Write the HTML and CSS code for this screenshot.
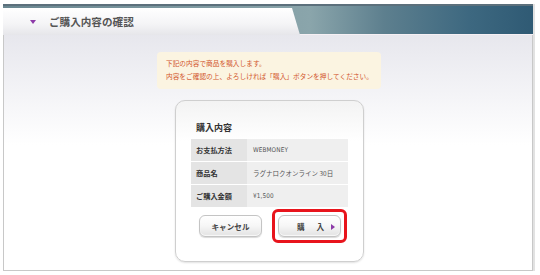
FILE: index.html
```html
<!DOCTYPE html>
<html lang="ja">
<head>
  <meta charset="UTF-8">
  <title>ご購入内容の確認</title>
  <link rel="stylesheet" href="styles.css">
</head>
<body>
  <div class="frame">
    <div class="header">
      <div class="tab">
        <span class="tab-arrow"></span>
        <h1>ご購入内容の確認</h1>
      </div>
    </div>

    <div class="content">
      <div class="notice">
        下記の内容で商品を購入します。<br>
        内容をご確認の上、よろしければ「購入」ボタンを押してください。
      </div>

      <div class="card">
        <h2>購入内容</h2>
        <table class="detail">
          <tr>
            <th>お支払方法</th>
            <td class="latin">WEBMONEY</td>
          </tr>
          <tr>
            <th>商品名</th>
            <td>ラグナロクオンライン 30日</td>
          </tr>
          <tr>
            <th>ご購入金額</th>
            <td class="latin">¥1,500</td>
          </tr>
        </table>

        <div class="actions">
          <button class="btn">キャンセル</button>
          <div class="highlight">
            <button class="btn btn-buy">購<span class="gap"></span>入<span class="buy-arrow"></span></button>
          </div>
        </div>
      </div>
    </div>
  </div>
</body>
</html>
```

FILE: styles.css
```css
body {
  margin: 0;
  background: #fff;
  font-family: "Noto Sans CJK JP", "Noto Sans", sans-serif;
}
.frame {
  margin: 4px 0 0 3px;
  width: 530px;
  height: 267px;
  box-sizing: border-box;
  border: 1px solid #c8c8c8;
  border-top: none;
  box-shadow: 2px 0 0 #e2e2e2;
  display: flex;
  flex-direction: column;
}
.header {
  height: 31px;
  box-sizing: border-box;
  padding-top: 2px;
  border-bottom: 1px solid #f6f0f4;
  background: linear-gradient(90deg, #6a8791 0%, #8aa5ab 58%, #5d7f8e 72%, #3d6880 88%, #2f5a74 100%);
  border-top: 2px solid #5c707c;
  margin: 0 -1px;
}
.tab {
  width: 297px;
  height: 27px;
  display: flex;
  align-items: center;
  padding-left: 27px;
  box-sizing: border-box;
  background: linear-gradient(#ffffff, #f4f4f6 60%, #e6e6ea);
  clip-path: polygon(0 0, 289px 0, 297px 100%, 0 100%);
}
.tab-arrow {
  width: 0;
  height: 0;
  border-left: 3.5px solid transparent;
  border-right: 3.5px solid transparent;
  border-top: 4px solid #8d3aa8;
  margin-right: 13px;
  margin-top: 1px;
}
.tab h1 {
  margin: 0;
  font-size: 10.6px;
  font-weight: bold;
  color: #555;
}
.content {
  flex: 1;
  padding-top: 17px;
  background: linear-gradient(#e7e7ed, #f4f4f7 60px, #fff 110px);
  display: flex;
  flex-direction: column;
  align-items: center;
}
.notice {
  width: 224px;
  height: 37px;
  box-sizing: border-box;
  padding: 5px 0 0 9px;
  margin-left: 2px;
  background: #fbf4e1;
  border-radius: 4px;
  color: #d2562c;
  font-size: 6.7px;
  line-height: 13px;
  white-space: nowrap;
}
.card {
  margin-top: 11px;
  margin-left: 3px;
  width: 189px;
  height: 162px;
  box-sizing: border-box;
  padding: 20px 15px 0;
  border: 1px solid #cfcfcf;
  border-radius: 10px;
  background: linear-gradient(#f3f3f3, #fff 40px);
  box-shadow: 0 1px 2px rgba(0,0,0,0.12);
}
.card h2 {
  margin: 0 0 5px 5px;
  font-size: 9px;
  line-height: 13px;
  font-weight: bold;
  color: #333;
}
.detail {
  width: 157px;
  border-collapse: separate;
  border-spacing: 0 1px;
  margin-top: -1px;
  font-size: 7.2px;
}
.detail th,
.detail td {
  height: 22px;
  padding: 0 0 0 5px;
  text-align: left;
}
.detail th {
  width: 51px;
  background: #e4e4e4;
  color: #333;
  font-weight: bold;
}
.detail td {
  background: #efefef;
  color: #555;
  padding-left: 6px;
  font-size: 6.5px;
}
.detail td.latin {
  font-family: "DejaVu Sans Condensed", "Liberation Sans", sans-serif;
  font-size: 6.4px;
  letter-spacing: 0.1px;
}
.actions {
  margin-top: 1px;
  padding: 0 0 0 8px;
  display: flex;
  align-items: center;
  justify-content: space-between;
}
.btn {
  width: 63px;
  height: 22px;
  padding: 0;
  border: 1px solid #c4c4c4;
  border-radius: 6px;
  background: linear-gradient(#ffffff, #f6f6f6 50%, #e2e2e2);
  box-shadow: 0 1px 1px rgba(0,0,0,0.15), inset 0 -1px 1px rgba(255,255,255,0.8);
  font-family: "Noto Sans CJK JP", sans-serif;
  font-size: 7.6px;
  font-weight: bold;
  color: #444;
  display: flex;
  align-items: center;
  justify-content: center;
}
.highlight {
  border: 3px solid #e8141c;
  border-radius: 6px;
  padding: 3px;
  margin-right: 1px;
  background: #fff;
}
.btn-buy {
  position: relative;
  padding-left: 2px;
}
.gap {
  width: 12px;
}
.buy-arrow {
  position: absolute;
  right: 5px;
  top: 8px;
  width: 0;
  height: 0;
  border-top: 3px solid transparent;
  border-bottom: 3px solid transparent;
  border-left: 4px solid #8d3aa8;
}
```
